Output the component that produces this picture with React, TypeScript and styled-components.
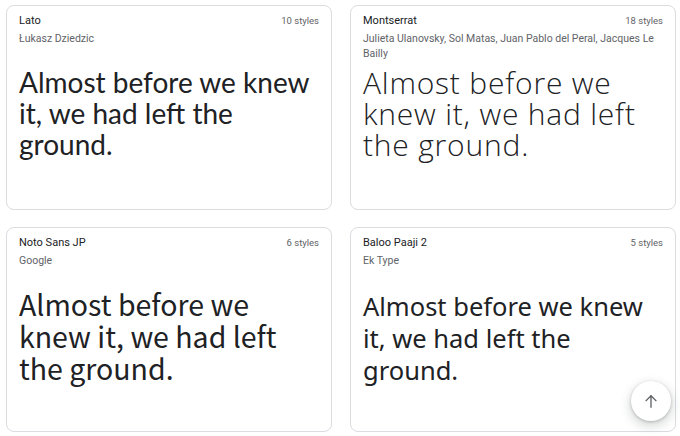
import React from "react";
import styled, { createGlobalStyle } from "styled-components";

const Global = createGlobalStyle`
  html, body { margin: 0; padding: 0; background: #ffffff; }
  body { font-family: Roboto, "Liberation Sans", Arial, sans-serif; overflow: hidden; }
`;

const Page = styled.main`
  position: relative;
  width: 680px;
  height: 436px;
  box-sizing: border-box;
  padding: 5px 4px 0 6px;
`;

const Grid = styled.div`
  display: grid;
  grid-template-columns: 326px 326px;
  grid-template-rows: 205px 205px;
  column-gap: 18px;
  row-gap: 17px;
`;

const Card = styled.article`
  box-sizing: border-box;
  border: 1px solid #dadce0;
  border-radius: 8px;
  padding: 0 12px;
  display: flex;
  flex-direction: column;
  overflow: hidden;
`;

const Header = styled.header`
  height: 56px;
  padding-top: 8px;
  box-sizing: border-box;
`;

const TitleRow = styled.div`
  display: flex;
  justify-content: space-between;
  align-items: baseline;
  line-height: 14px;
`;

const Name = styled.span`
  font-size: 11px;
  color: #202124;
`;

const Styles = styled.span`
  font-size: 9.5px;
  color: #5f6368;
`;

const Author = styled.div`
  margin-top: 3px;
  font-size: 10.5px;
  line-height: 15px;
  color: #5f6368;
`;

const Sample = styled.p<{ $family: string; $size: number; $weight: number; $line: number; $top: number; $spacing?: number }>`
  margin: ${(p) => p.$top}px 0 0 0;
  font-family: ${(p) => p.$family};
  font-size: ${(p) => p.$size}px;
  font-weight: ${(p) => p.$weight};
  line-height: ${(p) => p.$line}px;
  letter-spacing: ${(p) => p.$spacing ?? 0}px;
  color: #202124;
`;

const TopButton = styled.button`
  position: absolute;
  left: 631px;
  top: 381px;
  width: 40px;
  height: 40px;
  border-radius: 50%;
  border: none;
  background: #ffffff;
  box-shadow: 0 1px 3px rgba(60, 64, 67, 0.3), 0 4px 8px 3px rgba(60, 64, 67, 0.15);
  display: flex;
  align-items: center;
  justify-content: center;
  padding: 0;
  cursor: pointer;
`;

const fonts = [
  {
    name: "Lato",
    styles: "10 styles",
    author: "Łukasz Dziedzic",
    family: "Lato, sans-serif",
    size: 28,
    weight: 400,
    line: 31,
    top: 5,
  },
  {
    name: "Montserrat",
    styles: "18 styles",
    author: "Julieta Ulanovsky, Sol Matas, Juan Pablo del Peral, Jacques Le Bailly",
    family: '"Open Sans", sans-serif',
    size: 30,
    weight: 300,
    line: 31,
    top: 5,
    spacing: 0.8,
  },
  {
    name: "Noto Sans JP",
    styles: "6 styles",
    author: "Google",
    family: '"Noto Sans CJK JP", "Noto Sans", sans-serif',
    size: 28.5,
    weight: 400,
    line: 32,
    top: 4,
  },
  {
    name: "Baloo Paaji 2",
    styles: "5 styles",
    author: "Ek Type",
    family: '"Noto Sans", sans-serif',
    size: 25.5,
    weight: 400,
    line: 32,
    top: 6,
  },
];

export default function App() {
  return (
    <>
      <Global />
      <Page>
        <Grid>
          {fonts.map((f) => (
            <Card key={f.name}>
              <Header>
                <TitleRow>
                  <Name>{f.name}</Name>
                  <Styles>{f.styles}</Styles>
                </TitleRow>
                <Author>{f.author}</Author>
              </Header>
              <Sample $family={f.family} $size={f.size} $weight={f.weight} $line={f.line} $top={f.top} $spacing={f.spacing}>
                Almost before we knew it, we had left the ground.
              </Sample>
            </Card>
          ))}
        </Grid>
        <TopButton aria-label="Scroll to top">
          <svg width="18" height="18" viewBox="0 0 24 24" fill="none">
            <path d="M12 20V5M5.5 11.5L12 5l6.5 6.5" stroke="#5f6368" strokeWidth="1.8" strokeLinecap="square" />
          </svg>
        </TopButton>
      </Page>
    </>
  );
}
